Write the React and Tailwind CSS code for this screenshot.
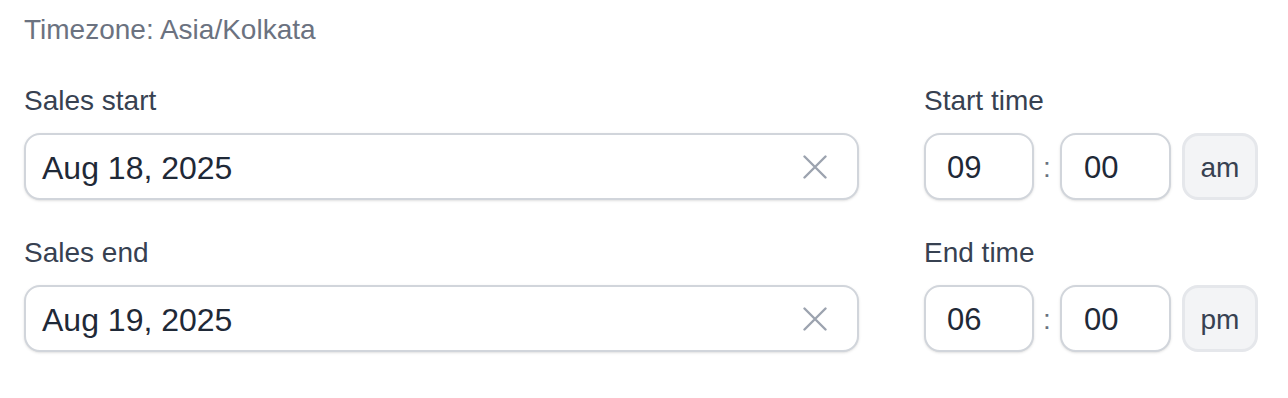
import React from "react";

const ClearIcon = () => (
  <svg width="24" height="24" viewBox="0 0 24 24" fill="none" className="text-[#9ca3af]">
    <path d="M1.5 1.5L22.5 22.5M22.5 1.5L1.5 22.5" stroke="currentColor" strokeWidth="2.4" strokeLinecap="round" />
  </svg>
);

const DateField = ({ label, value }) => (
  <div className="flex flex-col gap-3 w-[835px]">
    <label className="text-[28px] leading-[40px] text-[#374151]">{label}</label>
    <div className="flex items-center justify-between h-[67px] rounded-[16px] border-2 border-[#d1d5db] bg-white pl-4 pr-[30px] shadow-sm">
      <span className="pt-[3px] text-[32px] text-[#1f2937]">{value}</span>
      <ClearIcon />
    </div>
  </div>
);

const TimeField = ({ label, hour, minute, period }) => (
  <div className="flex flex-col gap-3 w-[334px]">
    <label className="text-[28px] leading-[40px] text-[#374151]">{label}</label>
    <div className="flex items-center h-[67px]">
      <div className="flex items-center w-[110px] h-full rounded-[16px] border-2 border-[#d1d5db] bg-white pl-[21px] pt-[3px] text-[31px] text-[#1f2937] shadow-sm">
        {hour}
      </div>
      <span className="w-[26px] pt-[3px] text-center text-[28px] text-[#6b7280]">:</span>
      <div className="flex items-center w-[111px] h-full rounded-[16px] border-2 border-[#d1d5db] bg-white pl-[22px] pt-[3px] text-[31px] text-[#1f2937] shadow-sm">
        {minute}
      </div>
      <div className="ml-[11px] flex items-center justify-center w-[76px] h-full rounded-[16px] border-[3px] border-[#e5e7eb] bg-[#f3f4f6] pt-[3px] text-[28px] text-[#374151]">
        {period}
      </div>
    </div>
  </div>
);

export default function App() {
  return (
    <div className="w-[1288px] h-[398px] bg-white pl-6 pt-[10px]" style={{ fontFamily: '"Liberation Sans", Arial, sans-serif' }}>
      <p className="text-[28px] leading-[40px] text-[#6b7280]">Timezone: Asia/Kolkata</p>
      <div className="mt-[31px] flex flex-col gap-[33px]">
        <div className="flex gap-[65px]">
          <DateField label="Sales start" value="Aug 18, 2025" />
          <TimeField label="Start time" hour="09" minute="00" period="am" />
        </div>
        <div className="flex gap-[65px]">
          <DateField label="Sales end" value="Aug 19, 2025" />
          <TimeField label="End time" hour="06" minute="00" period="pm" />
        </div>
      </div>
    </div>
  );
}
